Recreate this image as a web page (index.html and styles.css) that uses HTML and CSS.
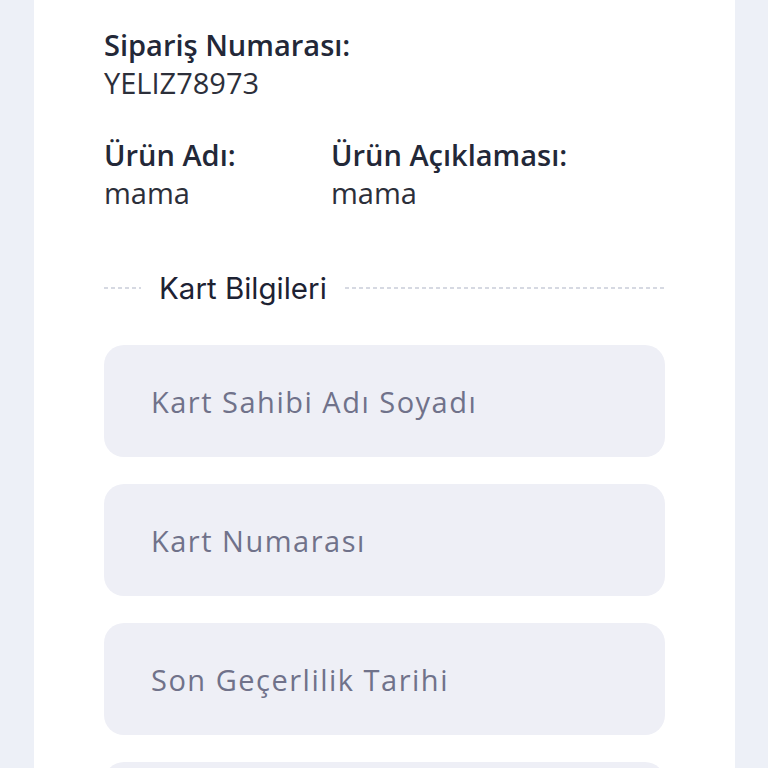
FILE: index.html
```html
<!DOCTYPE html>
<html lang="tr">
  <head>
    <meta charset="UTF-8" />
    <meta name="viewport" content="width=device-width, initial-scale=1.0" />
    <title>Ödeme</title>
    <link rel="stylesheet" href="styles.css">
  </head>
  <body>
    <div class="payment-card">
      <div class="info-block">
        <div class="info-label">Sipariş Numarası:</div>
        <div class="info-value">YELIZ78973</div>
      </div>
      <div class="info-row">
        <div class="info-block product-name">
          <div class="info-label">Ürün Adı:</div>
          <div class="info-value">mama</div>
        </div>
        <div class="info-block">
          <div class="info-label">Ürün Açıklaması:</div>
          <div class="info-value">mama</div>
        </div>
      </div>

      <!-- kart bilgileri -->
      <div class="divider">
        <span class="divider-line short"></span>
        <span class="divider-text">Kart Bilgileri</span>
        <span class="divider-line"></span>
      </div>

      <div class="card-form">
        <input type="text" class="field" placeholder="Kart Sahibi Adı Soyadı" />
        <input type="text" class="field" placeholder="Kart Numarası" />
        <input type="text" class="field" placeholder="Son Geçerlilik Tarihi" />
        <input type="text" class="field" placeholder="CVV" />
      </div>
    </div>
  </body>
</html>
```

FILE: styles.css
```css
* {
  box-sizing: border-box;
}
body {
  margin: 0;
  background-color: #edf0f7;
  font-family: "Open Sans", "Noto Sans", sans-serif;
  overflow: hidden;
}
.payment-card {
  width: 701px;
  margin-left: 34px;
  margin-top: -40px;
  background-color: white;
  padding: 66px 70px 40px;
  min-height: 900px;
}
.info-block {
  color: #232838;
}
.info-label {
  font-size: 29px;
  font-weight: 600;
  line-height: 38px;
}
.info-value {
  font-size: 29px;
  line-height: 38px;
  color: #2c2f3a;
}
.info-row {
  display: flex;
  margin-top: 34px;
}
.product-name {
  width: 227px;
}
.divider {
  display: flex;
  align-items: center;
  margin-top: 57px;
}
.divider-line {
  flex: 1;
  height: 2px;
  background-image: linear-gradient(to right, #d6d9e2 60%, transparent 60%);
  background-size: 7px 2px;
}
.divider-line.short {
  flex: none;
  width: 37px;
}
.divider-text {
  font-family: Inter, "Noto Sans", sans-serif;
  font-size: 29.5px;
  color: #1d2233;
  padding: 0 18px;
  line-height: 38px;
}
.card-form {
  display: flex;
  flex-direction: column;
  gap: 27px;
  margin-top: 38px;
}
.field {
  width: 100%;
  height: 112px;
  border: none;
  outline: none;
  border-radius: 20px;
  background-color: #eeeff6;
  padding: 0 47px;
  font-family: "Open Sans", "Noto Sans", sans-serif;
  font-size: 29px;
  letter-spacing: 1.5px;
  color: #3a3d52;
}
.field::placeholder {
  color: #70728a;
}
```
